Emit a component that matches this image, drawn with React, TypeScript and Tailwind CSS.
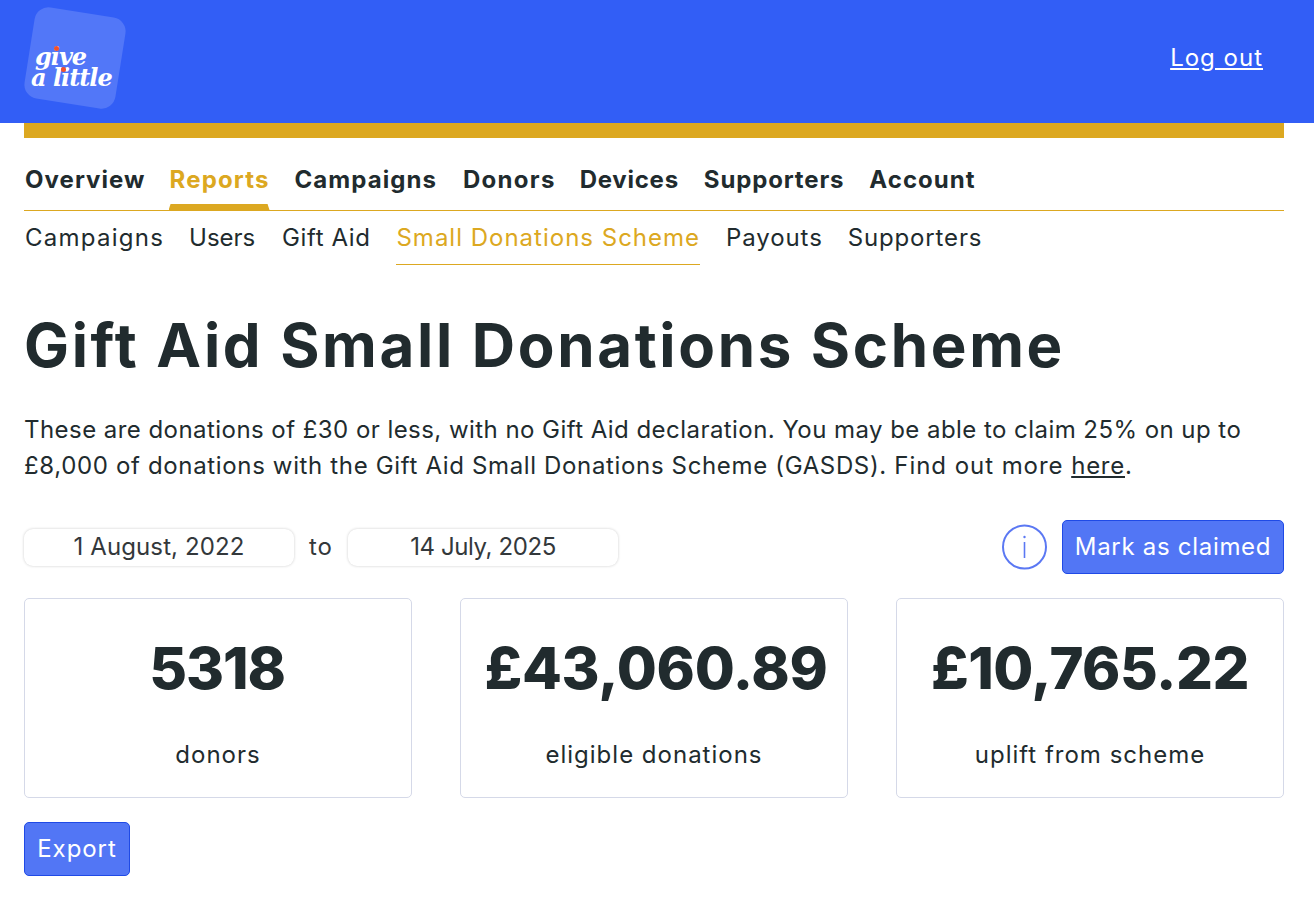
import React from "react";

const main = [
  { t: "Overview", c: "tracking-[1.05px]" },
  { t: "Reports", c: "tracking-[1.15px] -ml-px" },
  { t: "Campaigns", c: "tracking-[1.05px]" },
  { t: "Donors", c: "tracking-[1.3px] ml-px" },
  { t: "Devices", c: "tracking-[0.75px] -ml-px" },
  { t: "Supporters", c: "tracking-[0.85px]" },
  { t: "Account", c: "tracking-[1.05px]" },
];
const sub = [
  { t: "Campaigns", c: "tracking-[1.25px]" },
  { t: "Users", c: "tracking-[-0.05px] -ml-px" },
  { t: "Gift Aid", c: "tracking-[0.6px] ml-px" },
  { t: "Small Donations Scheme", c: "tracking-[1px] text-[#dca821] border-b border-[#dca821]" },
  { t: "Payouts", c: "tracking-[0.9px]" },
  { t: "Supporters", c: "tracking-[0.85px] -ml-px" },
];

function Logo() {
  return (
    <div className="relative w-[104px] h-[104px] ml-[24px] mt-[7px]">
      <div className="absolute left-[5px] top-[5px] w-[92px] h-[92px] rounded-[14px] bg-[#5277f8] rotate-[9deg]" />
      <div className="absolute left-[7px] top-[39px] font-['DejaVu_Serif',serif] italic font-bold text-white text-[24px] leading-[21px] tracking-[-1px] whitespace-nowrap">
        <div className="pl-[4px]">give</div>
        <div>a little</div>
      </div>
      <div className="absolute left-[30px] top-[39px] w-[5px] h-[5px] rounded-full bg-[#f4502a]" />
      <div className="absolute left-[37px] top-[60px] w-[5px] h-[5px] rounded-full bg-[#f4502a]" />
    </div>
  );
}

function Stat({ value, label, vc }: { value: string; label: string; vc: string }) {
  return (
    <div className="h-[200px] border border-[#d5d9e8] rounded-[5px] flex flex-col items-center">
      <div className={"mt-[31px] text-[58px] leading-[76px] font-extrabold text-[#212b2e] whitespace-nowrap " + vc}>{value}</div>
      <div className="mt-[32px] text-[24px] leading-[33px] text-[#212b2e] tracking-[1px]">{label}</div>
    </div>
  );
}

export default function App() {
  return (
    <div className="min-h-[898px] bg-white font-['Inter',sans-serif] text-[#212b2e]">
      <header className="h-[123px] bg-[#325ef6] flex items-start justify-between">
        <Logo />
        <a className="mt-[41px] mr-[51px] text-white underline text-[24px] leading-[34px] tracking-[1px]">Log out</a>
      </header>
      <div className="ml-[24px] mr-[30px]">
        <div className="h-[15px] bg-[#dca821]" />
        <nav className="h-[73px] border-b border-[#dca821] flex gap-[25px] pl-px">
          {main.map((m) => (
            <div key={m.t} className={"relative pt-[25px] text-[24px] leading-[34px] font-bold " + m.c + (m.t === "Reports" ? " text-[#dca821]" : " text-[#212b2e]")}>
              {m.t}
              {m.t === "Reports" && <div className="absolute -left-px right-0 bottom-0 h-[6px] bg-[#dca821] [clip-path:polygon(2px_0,calc(100%-2px)_0,100%_100%,0_100%)]" />}
            </div>
          ))}
        </nav>
        <nav className="h-[54px] flex gap-[26px] pl-px">
          {sub.map((m) => (
            <div key={m.t} className={"pt-[10px] text-[24px] leading-[34px] h-[54px] " + m.c}>
              {m.t}
            </div>
          ))}
        </nav>
        <h1 className="mt-[44px] text-[60px] leading-[72px] font-bold tracking-[2.66px] text-[#212b2e] whitespace-nowrap">Gift Aid Small Donations Scheme</h1>
        <p className="mt-[31px] text-[24px] leading-[36px] text-[#212b2e] whitespace-nowrap">
          <span className="tracking-[0.45px]">These are donations of £30 or less, with no Gift Aid declaration. You may be able to claim 25% on up to</span><br />
          <span className="tracking-[0.65px]">£8,000 of donations with the Gift Aid Small Donations Scheme (GASDS). </span>
          <span className="tracking-[0.95px]">Find out more </span>
          <a className="underline tracking-[0.75px]">here</a>.
        </p>
        <div className="mt-[36px] h-[54px] flex items-center">
          <div className="w-[270px] h-[37px] rounded-[9px] bg-white shadow-[0_0_3px_rgba(0,0,0,0.2)] text-center text-[24px] leading-[36px] tracking-[0.1px] text-[#33383b]">1 August, 2022</div>
          <span className="w-[54px] text-center text-[24px] tracking-[1px] text-[#33383b]">to</span>
          <div className="w-[270px] h-[37px] rounded-[9px] bg-white shadow-[0_0_3px_rgba(0,0,0,0.2)] text-center text-[24px] leading-[36px] tracking-[-0.4px] text-[#33383b]">14 July, 2025</div>
          <svg className="ml-auto mr-[15px]" width="45" height="46" viewBox="0 0 45 46" fill="none">
            <circle cx="22.5" cy="23" r="21.5" stroke="#5b78f3" strokeWidth="2" />
            <path d="M22.5 18V34" stroke="#5b78f3" strokeWidth="1.6" />
            <circle cx="22.5" cy="13" r="1.2" fill="#5b78f3" />
          </svg>
          <button className="h-[54px] w-[222px] rounded-[5px] bg-[#5276f5] border border-[#1f4ae6] text-white text-[24px] tracking-[0.7px]">Mark as claimed</button>
        </div>
        <div className="mt-[24px] grid grid-cols-3 gap-[48px]">
          <Stat value="5318" label="donors" vc="tracking-[-1.1px] -translate-x-px" />
          <Stat value="£43,060.89" label="eligible donations" vc="tracking-[-0.25px] translate-x-[2px]" />
          <Stat value="£10,765.22" label="uplift from scheme" vc="tracking-[-0.5px]" />
        </div>
        <button className="mt-[24px] h-[54px] w-[106px] rounded-[5px] bg-[#5276f5] border border-[#1f4ae6] text-white text-[24px] tracking-[0.95px]">Export</button>
      </div>
    </div>
  );
}
